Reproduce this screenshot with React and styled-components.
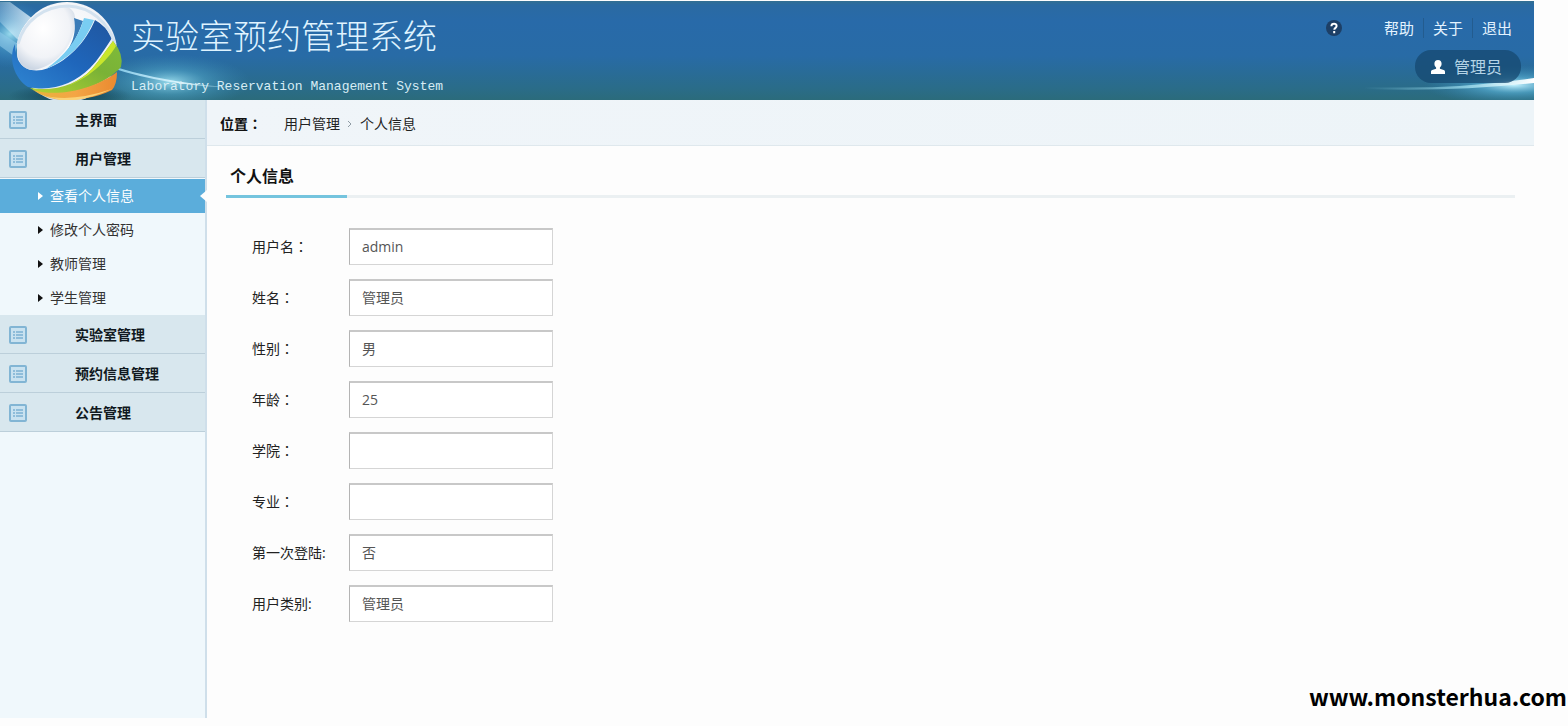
import React from "react";
import styled, { createGlobalStyle } from "styled-components";

const subItems = ["查看个人信息", "修改个人密码", "教师管理", "学生管理"];

const fields = [
	{ id: "username", label: "用户名", colon: "：", value: "admin" },
	{ id: "name", label: "姓名", colon: "：", value: "管理员" },
	{ id: "gender", label: "性别", colon: "：", value: "男" },
	{ id: "age", label: "年龄", colon: "：", value: "25" },
	{ id: "college", label: "学院", colon: "：", value: "" },
	{ id: "major", label: "专业", colon: "：", value: "" },
	{ id: "first", label: "第一次登陆", colon: ":", value: "否" },
	{ id: "type", label: "用户类别", colon: ":", value: "管理员" },
];

function LogoArt() {
	return (
		<Art width="460" height="99" viewBox="0 1 460 99" aria-hidden="true">
			<defs>
				<radialGradient id="ball" cx="0.45" cy="0.35" r="0.65">
					<stop offset="0" stopColor="#ffffff" />
					<stop offset="0.7" stopColor="#f1f3f7" />
					<stop offset="1" stopColor="#cdd7e4" />
				</radialGradient>
				<linearGradient id="blue" x1="0" y1="1" x2="1" y2="0">
					<stop offset="0" stopColor="#2f86d2" />
					<stop offset="0.5" stopColor="#1f66bb" />
					<stop offset="1" stopColor="#20569f" />
				</linearGradient>
				<linearGradient id="green" x1="0" y1="1" x2="1" y2="0">
					<stop offset="0" stopColor="#b5d433" />
					<stop offset="0.6" stopColor="#7ab236" />
					<stop offset="1" stopColor="#7fbb3a" />
				</linearGradient>
				<linearGradient id="orange" x1="0" y1="0" x2="1" y2="0">
					<stop offset="0" stopColor="#e8b33c" />
					<stop offset="0.5" stopColor="#f4a545" />
					<stop offset="1" stopColor="#ea8a30" />
				</linearGradient>
				<linearGradient id="ray" x1="0" y1="0" x2="1" y2="0">
					<stop offset="0" stopColor="#d9f1ff" stopOpacity="0.3" />
					<stop offset="1" stopColor="#f2fbff" stopOpacity="0.9" />
				</linearGradient>
				<linearGradient id="tail" x1="0" y1="0" x2="1" y2="0">
					<stop offset="0" stopColor="#7cc4e4" />
					<stop offset="0.5" stopColor="#dff8ff" />
					<stop offset="1" stopColor="#8fd0e4" stopOpacity="0" />
				</linearGradient>
				<radialGradient id="glow">
					<stop offset="0" stopColor="#a5e6f5" stopOpacity="0.9" />
					<stop offset="0.45" stopColor="#58b1d4" stopOpacity="0.45" />
					<stop offset="1" stopColor="#3c8fc0" stopOpacity="0" />
				</radialGradient>
				<radialGradient id="shade">
					<stop offset="0" stopColor="#0d3a4c" stopOpacity="0.9" />
					<stop offset="1" stopColor="#0d3a4c" stopOpacity="0" />
				</radialGradient>
			</defs>
			<ellipse cx="170" cy="82" rx="80" ry="28" fill="url(#glow)" />
			<ellipse cx="10" cy="34" rx="40" ry="34" fill="url(#glow)" />
			<path d="M0 2 L10 2 L40 24 L22 44 L0 22 Z" fill="url(#ray)" />
			<path d="M0 32 L18 44 L14 56 L0 46 Z" fill="#8fc9ea" opacity="0.6" />
			<path
				d="M112 66 Q150 78 196 84 Q220 87 250 88 Q210 88 170 82 Q135 76 112 68 Z"
				fill="url(#tail)"
			/>
			<ellipse cx="70" cy="96" rx="62" ry="12" fill="url(#shade)" />
			<circle cx="67" cy="52" r="50" fill="url(#ball)" />
			<path
				d="M15 44 C8 58 14 78 28 87 C52 92 74 84 90 68 C98 60 104 50 112 38 Q106 26 95 20 C86 42 66 64 42 70 C24 73 15 62 15 44 Z"
				fill="url(#blue)"
			/>
			<path
				d="M17 50 C16 30 32 10 58 6 C68 5 76 10 75 20 C76 42 58 66 34 70 C22 70 18 62 17 50 Z"
				fill="url(#ball)"
			/>
			<path
				d="M74 18 L83 21 C76 42 66 56 48 68 C68 56 78 38 74 18 Z"
				fill="#3a7cb8"
			/>
			<path
				d="M84 18 L94 20 C84 44 70 58 46 69 C64 56 78 40 84 18 Z"
				fill="#79cdf2"
			/>
			<path
				d="M18 44 C24 20 45 6 68 6 C91 7 108 22 115 44"
				fill="none"
				stroke="#d3e2ef"
				strokeWidth="3"
			/>
			<path
				d="M30 88 C56 92 78 84 92 69 C100 60 106 50 113 41 Q124 54 121 67 C106 84 76 95 46 94 Q36 92 30 88 Z"
				fill="url(#green)"
			/>
			<path
				d="M92 69 C100 60 106 50 113 41 L116 46 C108 60 88 80 62 88 Q80 82 92 69 Z"
				fill="#c9e62c"
			/>
			<path
				d="M33 90 C60 98 96 88 117 72 Q117 84 112 90 C96 98 78 100 62 100 Q44 98 33 90 Z"
				fill="url(#orange)"
			/>
			<path
				d="M42 95 Q70 103 112 89 Q92 98 75 100 L60 100 Z"
				fill="#fbd277"
			/>
		</Art>
	);
}

function FlareArt() {
	return (
		<Art $right width="170" height="99" viewBox="0 0 170 99" aria-hidden="true">
			<defs>
				<radialGradient id="flare">
					<stop offset="0" stopColor="#c4f3ff" />
					<stop offset="0.4" stopColor="#5bb4da" stopOpacity="0.6" />
					<stop offset="1" stopColor="#3585b5" stopOpacity="0" />
				</radialGradient>
				<linearGradient id="beam" x1="0" y1="0" x2="1" y2="0">
					<stop offset="0" stopColor="#8fdcf0" stopOpacity="0" />
					<stop offset="0.6" stopColor="#a8e6f5" stopOpacity="0.7" />
					<stop offset="1" stopColor="#ffffff" />
				</linearGradient>
			</defs>
			<ellipse cx="150" cy="84" rx="90" ry="20" fill="url(#flare)" />
			<path d="M0 86 Q90 89 170 77 L170 82 Q90 91 0 88 Z" fill="url(#beam)" />
		</Art>
	);
}

function ListIcon() {
	return (
		<svg width="18" height="18" viewBox="0 0 18 18" aria-hidden="true">
			<rect x="1" y="1" width="16" height="16" rx="1" fill="#c9e2f0" stroke="#82b5d4" strokeWidth="2" />
			<path d="M4 6h2M4 9h2M4 12h2M7 6h7M7 9h7M7 12h7" stroke="#7cb1d2" strokeWidth="1.4" />
		</svg>
	);
}

function MenuTitle({ children }) {
	return (
		<MenuButton type="button">
			<ListIcon />
			<span>{children}</span>
		</MenuButton>
	);
}

function App() {
	return (
		<Page>
			<GlobalStyle />
			<Header>
				<LogoArt />
				<FlareArt />
				<Brand>
					<h1>实验室预约管理系统</h1>
					<p>Laboratory Reservation Management System</p>
				</Brand>
				<Tools>
					<Links>
						<svg width="16" height="16" viewBox="0 0 16 16" aria-hidden="true">
							<circle cx="8" cy="8" r="8" fill="#1d3f66" />
							<path
								d="M5.4 6.2c.1-3.3 5.3-3.2 5.2-.1 0 1.8-2.3 1.7-2.3 3.7M8.2 11v2.2"
								fill="none"
								stroke="#fff"
								strokeWidth="2"
							/>
						</svg>
						<a href="#help">帮助</a>
						<a href="#about">关于</a>
						<a href="#logout">退出</a>
					</Links>
					<User type="button">
						<svg width="14" height="14" viewBox="0 0 14 14" aria-hidden="true">
							<path
								d="M7 0c2.400 0 3.600 1.600 3.600 3.700 0 1.700-.8 3-1.700 3.800v1.300l3.800 1.300c.9.4 1.300 1 1.300 1.900v2H0v-2c0-.9.4-1.500 1.300-1.900l3.800-1.300V7.500C4.200 6.700 3.400 5.400 3.400 3.700 3.400 1.600 4.600 0 7 0z"
								fill="#fff"
							/>
						</svg>
						管理员
					</User>
				</Tools>
			</Header>
			<Body>
				<Sidebar>
					<MenuTitle>主界面</MenuTitle>
					<MenuTitle>用户管理</MenuTitle>
					<SubMenu>
						{subItems.map((item, i) => (
							<SubItem key={item} $active={i === 0}>
								<a href={"#item" + i}>{item}</a>
							</SubItem>
						))}
					</SubMenu>
					<MenuTitle>实验室管理</MenuTitle>
					<MenuTitle>预约信息管理</MenuTitle>
					<MenuTitle>公告管理</MenuTitle>
				</Sidebar>
				<Main>
					<Crumbs>
						<b>
							位置<Colon>：</Colon>
						</b>
						<a href="#users">用户管理</a>
						<svg width="6" height="8" viewBox="0 0 6 8" aria-hidden="true">
							<path d="M1 1l3 3-3 3" fill="none" stroke="#8f9ba4" />
						</svg>
						<a href="#profile">个人信息</a>
					</Crumbs>
					<Heading>
						<h2>个人信息</h2>
					</Heading>
					<Form>
						{fields.map((f) => (
							<Row key={f.id}>
								<label htmlFor={f.id}>
									{f.label}
									<Colon>{f.colon}</Colon>
								</label>
								<input id={f.id} type="text" defaultValue={f.value} />
							</Row>
						))}
					</Form>
				</Main>
			</Body>
			<SiteMark>www.monsterhua.com</SiteMark>
		</Page>
	);
}

export default App;

const GlobalStyle = createGlobalStyle`
	* {
		box-sizing: border-box;
	}

	body {
		margin: 0;
		background: #fdfdfd;
		color: #222;
		font-family: "Open Sans", "Noto Sans CJK SC", sans-serif;
		font-size: 14px;
		line-height: 20px;
	}

	h1, h2, p, ul {
		margin: 0;
		padding: 0;
	}

	a {
		color: inherit;
		text-decoration: none;
	}

	button, input {
		font: inherit;
	}
`;

const Page = styled.div`
	position: relative;
	display: flex;
	flex-direction: column;
	min-height: 100vh;
	padding: 1px 34px 8px 0;
`;

const Header = styled.header`
	position: relative;
	display: flex;
	justify-content: space-between;
	min-height: 99px;
	overflow: hidden;
	background: linear-gradient(#326f92 0, #2a6aa2 4px, #286aa9 20px, #286ba6 55px, #2a6c88 88px, #2b6b7b 100%);
`;

const Art = styled.svg`
	position: absolute;
	top: 0;
	${(p) => (p.$right ? "right: 0;" : "left: 0;")}
`;

const Brand = styled.div`
	position: relative;
	padding: 14px 0 0 131px;

	h1 {
		color: #dff3ff;
		font-family: "Noto Sans CJK SC", sans-serif;
		font-size: 34px;
		font-weight: 300;
		line-height: 40px;
	}

	p {
		margin-top: 22px;
		color: #d8edf5;
		font-family: "Liberation Mono", monospace;
		font-size: 13px;
		line-height: 20px;
	}
`;

const Tools = styled.div`
	position: relative;
	display: flex;
	flex-direction: column;
	align-items: flex-end;
	gap: 12px;
	padding: 17px 13px 0 0;
`;

const Links = styled.nav`
	display: flex;
	align-items: center;
	color: #e4f3ff;
	font-size: 15px;

	svg {
		margin-right: 33px;
	}

	a {
		padding: 0 9px;
		line-height: 20px;
	}

	a + a {
		border-left: 1px solid #235c8f;
	}
`;

const User = styled.button`
	display: flex;
	align-items: center;
	gap: 9px;
	height: 33px;
	padding: 0 19px 0 16px;
	border: 0;
	border-radius: 16px;
	background: rgba(22, 72, 112, 0.75);
	color: #b4d4e6;
	font-size: 16px;
`;

const Body = styled.div`
	display: flex;
	flex: 1;
`;

const Sidebar = styled.aside`
	width: 207px;
	flex-shrink: 0;
	border-right: 2px solid #cfdfea;
	background: #f0f8fc;
`;

const MenuButton = styled.button`
	display: flex;
	align-items: center;
	gap: 48px;
	width: 100%;
	height: 39px;
	padding: 1px 9px 0;
	border: 0;
	border-bottom: 1px solid #bccfda;
	background: #d8e7ee;
	color: #101820;
	font-size: 14px;
	font-weight: 700;
`;

const SubMenu = styled.ul`
	list-style: none;
	padding-top: 1px;
`;

const SubItem = styled.li`
	position: relative;
	color: ${(p) => (p.$active ? "#fff" : "#333")};
	background: ${(p) => (p.$active ? "#5baddb" : "transparent")};

	a {
		display: flex;
		align-items: center;
		gap: 7px;
		height: 34px;
		padding-left: 38px;
	}

	a::before {
		content: "";
		border: 4px solid transparent;
		border-left: 5px solid ${(p) => (p.$active ? "#fff" : "#111")};
		border-right: 0;
	}

	&::after {
		content: "";
		display: ${(p) => (p.$active ? "block" : "none")};
		position: absolute;
		right: -2px;
		top: 11px;
		border: 6px solid transparent;
		border-right: 7px solid #fdfdfd;
		border-left: 0;
	}
`;

const Main = styled.main`
	flex: 1;
	min-width: 0;
`;

const Colon = styled.span`
	font-family: "Open Sans", "Noto Sans CJK TC", sans-serif;
`;

const Crumbs = styled.nav`
	display: flex;
	align-items: center;
	gap: 7px;
	height: 46px;
	padding: 2px 0 0 13px;
	border-bottom: 1px solid #dfe8ed;
	background: linear-gradient(90deg, #f0f5f9, #edf4f8);

	b {
		margin-right: 15px;
		color: #111;
	}
`;

const Heading = styled.div`
	display: flex;
	margin: 11px 19px 0 19px;
	border-bottom: 3px solid #ebf0f2;

	h2 {
		min-width: 121px;
		margin-bottom: -3px;
		padding: 0 4px;
		border-bottom: 3px solid #74c4de;
		color: #111;
		font-size: 16px;
		line-height: 38px;
	}
`;

const Form = styled.form`
	display: flex;
	flex-direction: column;
	gap: 14px;
	padding: 30px 0 40px 45px;
`;

const Row = styled.div`
	display: flex;
	align-items: center;

	label {
		width: 97px;
	}

	input {
		width: 204px;
		height: 37px;
		padding: 0 12px 2px;
		border: 1px solid #d5d5d5;
		border-top: 2px solid #c8c8c8;
		border-left-color: #b4b4b4;
		background: #fff;
		color: #555;
		outline: none;
	}
`;

const SiteMark = styled.div`
	position: absolute;
	right: 1px;
	bottom: 14px;
	color: #000;
	font-family: "Noto Sans CJK SC", sans-serif;
	font-size: 23px;
	font-weight: 700;
	line-height: 32px;
`;
